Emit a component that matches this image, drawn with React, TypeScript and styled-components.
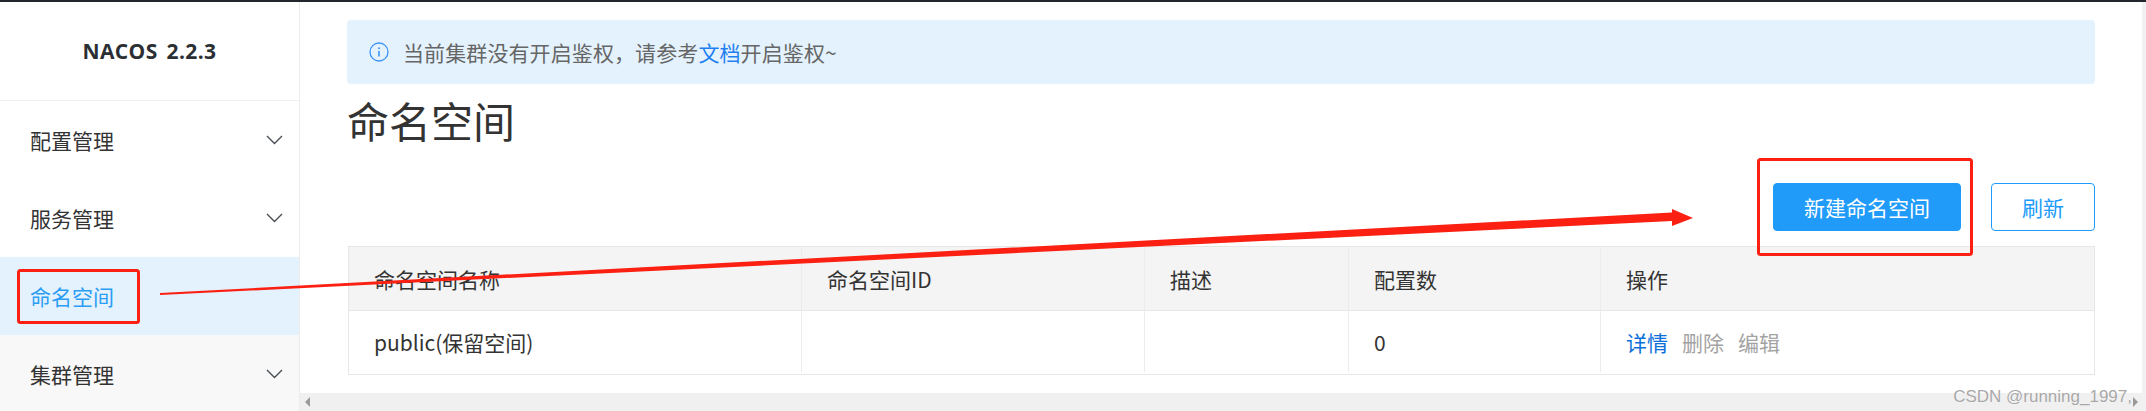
import styled, { createGlobalStyle } from 'styled-components'

const GlobalStyle = createGlobalStyle`
  html, body {
    margin: 0;
    padding: 0;
    background: #fff;
    overflow: hidden;
  }
  * {
    box-sizing: border-box;
  }
`

const fontStack = `"Noto Sans CJK SC", "Noto Sans", sans-serif`

const columns = '453px 343px 204px 252px 1fr'

const Page = styled.div`
  position: relative;
  width: 2146px;
  height: 411px;
  display: flex;
  overflow: hidden;
  border-top: 2px solid #23272b;
  font-family: ${fontStack};
  font-size: 21px;
  color: #333;
`

const Sidebar = styled.aside`
  width: 300px;
  flex: none;
  border-right: 1px solid #ececec;
  display: flex;
  flex-direction: column;
`

const Brand = styled.div`
  height: 99px;
  flex: none;
  display: flex;
  align-items: center;
  justify-content: center;
  border-bottom: 1px solid #efefef;
  font-family: "Open Sans", sans-serif;
  font-size: 21px;
  font-weight: 700;
  letter-spacing: 0.4px;
  word-spacing: 3px;
  color: #2b2f33;
`

const NavItem = styled.div<{ $active?: boolean; $muted?: boolean }>`
  height: 78px;
  flex: none;
  display: flex;
  align-items: center;
  justify-content: space-between;
  padding: 0 16px 0 30px;
  color: ${p => (p.$active ? '#2b9df5' : '#333')};
  background: ${p => (p.$active ? '#e4f2fd' : p.$muted ? '#f8f8f8' : '#fff')};
`

const Main = styled.main`
  flex: 1;
  min-width: 0;
  display: flex;
  flex-direction: column;
`

const Content = styled.div`
  flex: 1;
  padding: 18px 47px 0 47px;
`

const Alert = styled.div`
  height: 64px;
  display: flex;
  align-items: center;
  gap: 14px;
  padding: 0 0 0 22px;
  border-radius: 4px;
  background: #e4f2fd;
  color: #666;
  letter-spacing: 0.1px;
`

const AlertLink = styled.a`
  color: #1f7ff0;
  text-decoration: none;
`

const Title = styled.h1`
  margin: 0;
  height: 76px;
  line-height: 72px;
  font-size: 42px;
  font-weight: 400;
  color: #333;
`

const Toolbar = styled.div`
  margin-top: 23px;
  margin-bottom: 15px;
  display: flex;
  justify-content: flex-end;
  gap: 30px;
`

const Button = styled.button<{ $primary?: boolean }>`
  height: 48px;
  width: ${p => (p.$primary ? '188px' : '104px')};
  padding: 0;
  border-radius: 4px;
  border: 1px solid #209bfa;
  background: ${p => (p.$primary ? '#209bfa' : '#fff')};
  color: ${p => (p.$primary ? '#fff' : '#209bfa')};
  font-family: ${fontStack};
  font-size: 21px;
`

const Table = styled.div`
  margin-left: 1px;
  border: 1px solid #e6e6e6;
`

const Row = styled.div<{ $head?: boolean }>`
  display: grid;
  grid-template-columns: ${columns};
  height: ${p => (p.$head ? '64px' : '63px')};
  padding-bottom: ${p => (p.$head ? '0' : '2px')};
  background: ${p => (p.$head ? '#f4f4f4' : '#fff')};
  border-bottom: ${p => (p.$head ? '1px solid #e6e6e6' : 'none')};
`

const Cell = styled.div`
  display: flex;
  align-items: center;
  gap: 14px;
  padding-left: 25px;
  border-right: 1px solid #ececec;

  &:last-child {
    border-right: none;
  }
`

const Action = styled.a<{ $disabled?: boolean }>`
  color: ${p => (p.$disabled ? '#a3a3a3' : '#0a6fd8')};
  text-decoration: none;
`

const HScrollbar = styled.div`
  height: 18px;
  flex: none;
  margin-top: auto;
  background: #f0f0f0;
  display: flex;
  align-items: center;
  justify-content: space-between;
  padding: 0 4px 0 5px;
`

const Arrow = styled.span<{ $dir: 'left' | 'right' }>`
  width: 0;
  height: 0;
  border-top: 5px solid transparent;
  border-bottom: 5px solid transparent;
  border-${p => (p.$dir === 'left' ? 'right' : 'left')}: 5px solid #9a9a9a;
`

const VScrollbar = styled.div`
  width: 4px;
  flex: none;
  background: #f1f1f1;
`

const Overlay = styled.svg`
  position: absolute;
  left: 0;
  top: -2px;
  pointer-events: none;
`

const Watermark = styled.span`
  position: absolute;
  right: 14px;
  bottom: 4px;
  font-family: "Liberation Sans", sans-serif;
  font-size: 17px;
  color: #a8a8a8;
  text-shadow: 0 0 1px #fff;
`

const Chevron = () => (
  <svg width="17" height="10" viewBox="0 0 17 10" fill="none">
    <path d="M1 1l7.5 7.5L16 1" stroke="#4a4f55" strokeWidth="1.4" />
  </svg>
)

const InfoIcon = () => (
  <svg width="20" height="20" viewBox="0 0 20 20" fill="none">
    <circle cx="10" cy="10" r="9" stroke="#3d94f6" strokeWidth="1.3" />
    <circle cx="10" cy="6.2" r="1" fill="#3d94f6" />
    <path d="M10 9v5.4" stroke="#3d94f6" strokeWidth="1.6" />
  </svg>
)

export default function App() {
  return (
    <Page>
      <GlobalStyle />
      <Sidebar>
        <Brand>NACOS 2.2.3</Brand>
        <NavItem>配置管理<Chevron /></NavItem>
        <NavItem>服务管理<Chevron /></NavItem>
        <NavItem $active>命名空间</NavItem>
        <NavItem $muted>集群管理<Chevron /></NavItem>
      </Sidebar>
      <Main>
        <Content>
          <Alert>
            <InfoIcon />
            <span>当前集群没有开启鉴权，请参考<AlertLink>文档</AlertLink>开启鉴权~</span>
          </Alert>
          <Title>命名空间</Title>
          <Toolbar>
            <Button $primary>新建命名空间</Button>
            <Button>刷新</Button>
          </Toolbar>
          <Table>
            <Row $head>
              <Cell>命名空间名称</Cell>
              <Cell>命名空间ID</Cell>
              <Cell>描述</Cell>
              <Cell>配置数</Cell>
              <Cell>操作</Cell>
            </Row>
            <Row>
              <Cell>public(保留空间)</Cell>
              <Cell />
              <Cell />
              <Cell>0</Cell>
              <Cell>
                <Action>详情</Action>
                <Action $disabled>删除</Action>
                <Action $disabled>编辑</Action>
              </Cell>
            </Row>
          </Table>
        </Content>
        <HScrollbar>
          <Arrow $dir="left" />
          <Arrow $dir="right" />
        </HScrollbar>
      </Main>
      <VScrollbar />

      {/* red annotations drawn over the screenshot */}
      <Overlay width="2146" height="411" viewBox="0 0 2146 411" fill="none">
        <rect x="18.5" y="270.5" width="120" height="52" rx="2" stroke="#fb2012" strokeWidth="3" />
        <rect x="1758.5" y="159.5" width="213" height="95" rx="2" stroke="#fb2012" strokeWidth="3" />
        <path d="M160 293 L1672 212.5 L1672 209 L1693 218 L1672 226 L1672 221 L160 295 Z" fill="#fb2012" />
      </Overlay>
      <Watermark>CSDN @running_1997,</Watermark>
    </Page>
  )
}
